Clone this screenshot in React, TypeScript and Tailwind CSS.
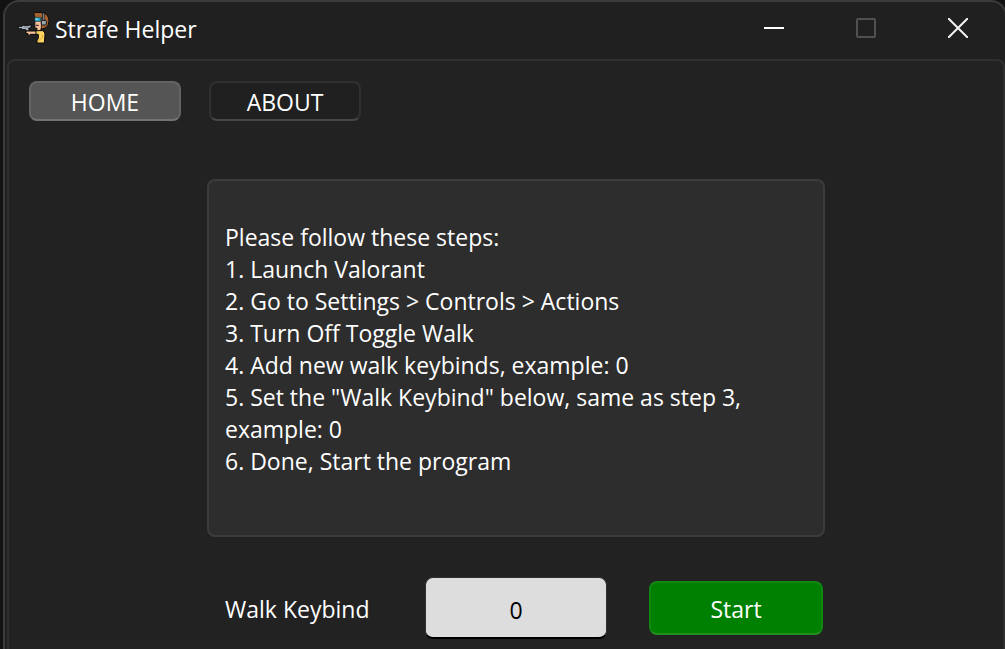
import { useState } from "react";

const steps = [
  "1. Launch Valorant",
  "2. Go to Settings > Controls > Actions",
  "3. Turn Off Toggle Walk",
  "4. Add new walk keybinds, example: 0",
  '5. Set the "Walk Keybind" below, same as step 3, example: 0',
  "6. Done, Start the program",
];

function AppIcon() {
  return (
    <svg className="h-10 w-9 shrink-0" viewBox="0 0 108 120" aria-hidden="true" strokeLinejoin="round">
      <path d="M55 14 H82 Q98 20 99 38 Q99 54 88 60 L76 64 L70 30 H56 Z" fill="#a5632f" stroke="#0b0909" strokeWidth="3" />
      <path d="M57 27 H76 V58 L73 69 H63 V60 H57 Z" fill="#f9c09a" stroke="#0b0909" strokeWidth="2" />
      <path d="M55 16 H79 V26 H57 Z" fill="#a5632f" />
      <path d="M55 29 H74 V40 H57 Z" fill="#27a9ce" stroke="#11303a" strokeWidth="2" />
      <path d="M59 31 h6 v5 h-6z" fill="#8de3ee" />
      <path d="M60 52 H68" stroke="#171012" strokeWidth="3" />
      <path d="M82 14 V37" fill="none" stroke="#11151b" strokeWidth="7" />
      <path d="M82 16 V37" fill="none" stroke="#8796a5" strokeWidth="3" />
      <rect x="76" y="37" width="15" height="14" rx="3" fill="#98a4ae" stroke="#11151b" strokeWidth="3" />
      <path d="M7 55 H17 L22 52 H40 L45 49 V60 H38 L40 69 H32 L29 65 H21 L16 62 H7 Z" fill="#a9b4bf" stroke="#0b0b0d" strokeWidth="3" />
      <path d="M23 57 H36" stroke="#59626b" strokeWidth="2" />
      <path d="M30 69 H64 V79 H42 L41 83 H37 L36 77 H30 Z" fill="#f9c09a" stroke="#0b0909" strokeWidth="3" />
      <path d="M60 68 H80 Q86 70 87 78 L85 105 H63 V98 L67 90 V79 H60 Z" fill="#fbd462" stroke="#0b0909" strokeWidth="3" />
      <path d="M79 80 V90 L66 98" fill="none" stroke="#e1a841" strokeWidth="3" />
    </svg>
  );
}

export default function App() {
  const [tab, setTab] = useState("HOME");
  const [keybind, setKeybind] = useState("0");

  return (
    <div className="flex min-h-screen flex-col overflow-x-hidden bg-[#121212] pl-[3px] font-['Open_Sans','Noto_Sans',sans-serif] text-[23px] leading-8 text-white">
      <div className="-mr-0.5 flex flex-1 flex-col rounded-t-2xl border-2 border-b-0 border-[#3b3b3b] bg-[#202020] pl-0.5">
        <header className="flex h-[57px] items-start justify-between pr-px pl-[9px]">
          <div className="flex items-center pt-1.5">
            <AppIcon />
            <h1 className="pt-0.5 pl-[3px] whitespace-nowrap">Strafe Helper</h1>
          </div>
          <div className="flex h-[52px]">
            <button aria-label="Minimize" className="flex w-[92px] items-center justify-center">
              <svg className="size-5" viewBox="0 0 20 20" aria-hidden="true">
                <path d="M0 10H20" stroke="#fff" strokeWidth="2" />
              </svg>
            </button>
            <button aria-label="Maximize" disabled className="flex w-[92px] items-center justify-center">
              <svg className="size-5" viewBox="0 0 20 20" fill="none" aria-hidden="true">
                <rect x="1" y="1" width="18" height="18" rx="1" stroke="#505050" strokeWidth="2" />
              </svg>
            </button>
            <button aria-label="Close" className="flex w-[92px] items-center justify-center">
              <svg className="size-5" viewBox="0 0 20 20" aria-hidden="true">
                <path d="M0 0L20 20M20 0L0 20" stroke="#f2f2f2" strokeWidth="2" />
              </svg>
            </button>
          </div>
        </header>
        <main className="flex-1 rounded-t-lg border-2 border-b-0 border-[#2f2f2f] bg-[#222222]">
          <nav className="flex gap-7 px-5 pt-5">
            {["HOME", "ABOUT"].map((name) => (
              <button
                key={name}
                onClick={() => setTab(name)}
                className={
                  tab === name
                    ? "flex h-10 w-[152px] items-center justify-center rounded-lg border-2 border-[#636363] border-b-[#737373] bg-[#555555] pt-0.5"
                    : "flex h-10 w-[152px] items-center justify-center rounded-lg border-2 border-[#303030] border-b-[#474747] bg-[#202020] pt-0.5"
                }
              >
                {name}
              </button>
            ))}
          </nav>
          <div className="pt-[58px] pr-[178px] pl-[198px]">
            <section className="h-[358px] rounded-lg border-2 border-[#3c3c3c] bg-[#2d2d2d] px-4 pt-10">
              <p>Please follow these steps:</p>
              <ol>
                {steps.map((step) => (
                  <li key={step}>{step}</li>
                ))}
              </ol>
            </section>
            <form className="flex items-center pt-10 pr-0.5 pl-[18px]" onSubmit={(event) => event.preventDefault()}>
              <label htmlFor="keybind" className="grow pt-0.5 whitespace-nowrap">
                Walk Keybind
              </label>
              <input
                id="keybind"
                value={keybind}
                onChange={(event) => setKeybind(event.target.value)}
                className="mr-[42px] h-[62px] w-[182px] rounded-lg border border-b-2 border-[#303030] border-b-black bg-[#dddddd] pt-1 text-center text-black outline-none"
              />
              <button className="h-[54px] w-[174px] rounded-lg border-2 border-[#108710] border-b-[#208f20] bg-[#008000] pt-0.5">
                Start
              </button>
            </form>
          </div>
        </main>
      </div>
    </div>
  );
}
